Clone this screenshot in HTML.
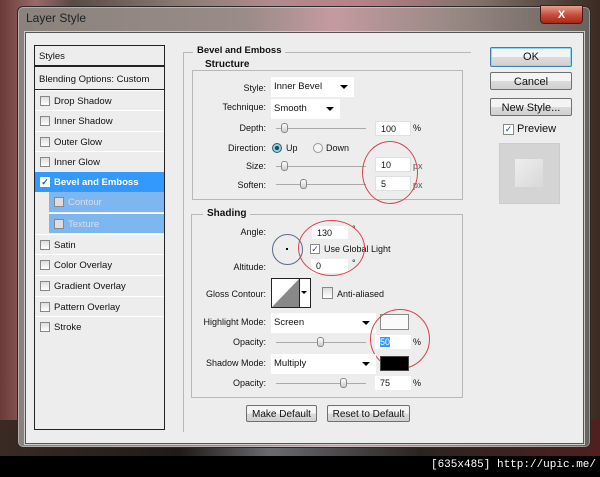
<!DOCTYPE html>
<html><head><meta charset="utf-8"><style>
*{margin:0;padding:0;box-sizing:border-box}
body{width:600px;height:477px;background:#000;position:relative;overflow:hidden;font-family:"Liberation Sans",sans-serif;font-size:9px;color:#111}
.a{position:absolute}
.lbl{position:absolute;text-align:right;width:90px;font-size:9px}
.inp{position:absolute;background:#fff;border:1px solid #e0e0e0;font-size:9px;padding:2px 0 0 5px}
.grp{position:absolute;border:1px solid #b8b8b8}
.gt{position:absolute;background:#ededed;font-weight:bold;font-size:9.5px;padding:0 4px}
.cb{position:absolute;width:10px;height:10px;border:1px solid #888;background:linear-gradient(#ddd,#fff)}
.row{position:absolute;left:35px;width:129px;height:20px;border-top:1px solid #fff;font-size:9.5px;padding:5px 0 0 19px}
.row .cb{left:5px;top:5px}
.sl{position:absolute;height:1px;background:#aaa;width:90px}
.th{position:absolute;width:7px;height:10px;border:1px solid #888;border-radius:3px;background:linear-gradient(#fff,#ccc)}
.dd{position:absolute;background:#fff;font-size:9.5px;padding:4px 0 0 3px}
.dd:after{content:"";position:absolute;right:6px;top:8px;border:4px solid transparent;border-top:4px solid #000}
.btn{position:absolute;border:1px solid #707070;border-radius:2px;background:linear-gradient(#f4f4f4 50%,#dcdcdc 50%,#d0d0d0);text-align:center;font-size:10px;padding-top:3px}
.red{position:absolute;border:1px solid #d8424e;border-radius:50%}
</style></head><body>
<div class="a" style="left:0;top:0;width:600px;height:456px;background:linear-gradient(90deg,#6a3a38 0,#9a6a68 6%,#5a4a44 12%,#8a7a72 30%,#b08a8c 45%,#b88088 60%,#807068 80%,#3a2a22 100%)"></div>
<div class="a" style="left:0;top:420px;width:600px;height:36px;background:linear-gradient(90deg,#3a2a24,#201a18 30%,#6a6a70 45%,#2a2420 70%,#502020)"></div>
<div class="a" style="left:17px;top:6px;width:574px;height:442px;border:1px solid #2a2a2a;border-radius:6px;background:linear-gradient(90deg,#8a827c,#9a8c88 40%,#c49aa0 55%,#9a8a86 75%,#6a625c);box-shadow:inset 0 0 0 1px rgba(255,255,255,.35)"></div>
<div class="a" style="left:26px;top:11px;font-size:12px;color:#222">Layer Style</div>
<div class="a" style="left:540px;top:5px;width:43px;height:19px;border:1px solid #4a1a1a;border-radius:0 0 4px 4px;background:linear-gradient(#e8a090,#c85040 50%,#a82818);color:#fff;font-weight:bold;font-size:11px;text-align:center;padding-top:3px">X</div>
<div class="a" style="left:25px;top:32px;width:559px;height:412px;background:#ededed;border:1px solid #555;box-shadow:0 0 0 1px #ccc"></div>

<!-- list -->
<div class="a" style="left:34px;top:45px;width:131px;height:385px;border:1px solid #222;background:#ededed"></div>
<div class="a" style="left:35px;top:46px;width:129px;height:21px;font-size:9.5px;padding:5px 0 0 4px;border-bottom:2px solid #222">Styles</div>
<div class="a" style="left:35px;top:69px;width:129px;height:21px;font-size:9.5px;padding:5px 0 0 4px;border-bottom:1px solid #222">Blending Options: Custom</div>
<div class="row" style="top:90px"><div class="cb"></div>Drop Shadow</div>
<div class="row" style="top:110px"><div class="cb"></div>Inner Shadow</div>
<div class="row" style="top:131px"><div class="cb"></div>Outer Glow</div>
<div class="row" style="top:151px"><div class="cb"></div>Inner Glow</div>
<div class="row" style="top:172px;background:#3399ff;color:#fff;font-weight:bold;border-top:none"><div class="cb" style="background:#fff;border-color:#fff;color:#2255aa;font-size:9px;line-height:8px;text-align:center">✓</div>Bevel and Emboss</div>
<div class="row" style="top:192px;left:49px;width:115px;background:#7eb6f0;color:#dde;border-top:none"><div class="cb" style="background:#ddd"></div>Contour</div>
<div class="row" style="top:213px;left:49px;width:115px;background:#7eb6f0;color:#dde"><div class="cb" style="background:#ddd"></div>Texture</div>
<div class="row" style="top:234px"><div class="cb"></div>Satin</div>
<div class="row" style="top:254px"><div class="cb"></div>Color Overlay</div>
<div class="row" style="top:275px"><div class="cb"></div>Gradient Overlay</div>
<div class="row" style="top:296px"><div class="cb"></div>Pattern Overlay</div>
<div class="row" style="top:316px"><div class="cb"></div>Stroke</div>

<!-- main group -->
<div class="grp" style="left:183px;top:52px;width:288px;height:380px;border-bottom:none;border-right:none"></div>
<div class="gt" style="left:193px;top:45px">Bevel and Emboss</div>
<div class="grp" style="left:192px;top:70px;width:271px;height:130px"></div>
<div class="gt" style="left:201px;top:59px;font-size:10px">Structure</div>
<div class="lbl" style="left:176px;top:83px">Style:</div>
<div class="dd" style="left:271px;top:77px;width:83px;height:20px">Inner Bevel</div>
<div class="lbl" style="left:176px;top:102px">Technique:</div>
<div class="dd" style="left:271px;top:99px;width:69px;height:20px">Smooth</div>
<div class="lbl" style="left:176px;top:123px">Depth:</div>
<div class="sl" style="left:276px;top:128px"></div><div class="th" style="left:281px;top:123px"></div>
<div class="inp" style="left:375px;top:121px;width:36px;height:15px">100</div><div class="a" style="left:413px;top:123px">%</div>
<div class="lbl" style="left:176px;top:143px">Direction:</div>
<div class="a" style="left:272px;top:143px;width:10px;height:10px;border-radius:50%;border:1px solid #2a5a80;background:radial-gradient(#1a4a70 35%,#9cc 40%)"></div>
<div class="a" style="left:286px;top:143px">Up</div>
<div class="a" style="left:313px;top:143px;width:10px;height:10px;border-radius:50%;border:1px solid #999;background:#f4f4f4"></div>
<div class="a" style="left:326px;top:143px">Down</div>
<div class="lbl" style="left:176px;top:161px">Size:</div>
<div class="sl" style="left:276px;top:166px"></div><div class="th" style="left:281px;top:161px"></div>
<div class="inp" style="left:375px;top:157px;width:36px;height:15px">10</div><div class="a" style="left:413px;top:161px;color:#555">px</div>
<div class="lbl" style="left:176px;top:180px">Soften:</div>
<div class="sl" style="left:276px;top:184px"></div><div class="th" style="left:300px;top:179px"></div>
<div class="inp" style="left:375px;top:176px;width:36px;height:15px">5</div><div class="a" style="left:413px;top:180px;color:#555">px</div>
<div class="red" style="left:362px;top:141px;width:56px;height:63px"></div>

<!-- shading -->
<div class="grp" style="left:191px;top:214px;width:272px;height:184px"></div>
<div class="gt" style="left:203px;top:208px;font-size:10px">Shading</div>
<div class="lbl" style="left:176px;top:227px">Angle:</div>
<div class="a" style="left:272px;top:234px;width:31px;height:31px;border-radius:50%;border:1.5px solid #5a6a90"></div>
<div class="a" style="left:286px;top:248px;width:2px;height:2px;background:#000"></div>
<div class="inp" style="left:312px;top:226px;width:36px;height:13px;border:none">130</div><div class="a" style="left:352px;top:224px">°</div>
<div class="cb" style="left:310px;top:244px;background:#fff;color:#2a4a90;font-size:9px;line-height:8px;text-align:center">✓</div>
<div class="a" style="left:324px;top:244px">Use Global Light</div>
<div class="lbl" style="left:176px;top:262px">Altitude:</div>
<div class="inp" style="left:311px;top:259px;width:37px;height:14px;border:none">0</div><div class="a" style="left:352px;top:258px">°</div>
<div class="red" style="left:298px;top:220px;width:67px;height:56px"></div>
<div class="lbl" style="left:176px;top:289px">Gloss Contour:</div>
<div class="a" style="left:271px;top:278px;width:40px;height:30px;border:1px solid #222;background:#fff"></div>
<div class="a" style="left:272px;top:279px;width:0;height:0;border-left:27px solid transparent;border-bottom:28px solid #888"></div>
<div class="a" style="left:299px;top:279px;width:11px;height:28px;border-left:1px solid #222;background:#fff"></div>
<div class="a" style="left:301px;top:291px;border:3px solid transparent;border-top:3px solid #000"></div>
<div class="cb" style="left:322px;top:287px;width:11px;height:12px"></div>
<div class="a" style="left:337px;top:289px">Anti-aliased</div>
<div class="lbl" style="left:176px;top:317px">Highlight Mode:</div>
<div class="dd" style="left:271px;top:313px;width:105px;height:20px">Screen</div>
<div class="a" style="left:380px;top:314px;width:29px;height:16px;border:1px solid #888;background:#fafafa"></div>
<div class="lbl" style="left:176px;top:337px">Opacity:</div>
<div class="sl" style="left:276px;top:342px"></div><div class="th" style="left:317px;top:337px"></div>
<div class="inp" style="left:375px;top:335px;width:36px;height:14px;border:none"><span style="background:#3399ff;color:#fff">50</span></div><div class="a" style="left:413px;top:337px">%</div>
<div class="red" style="left:370px;top:309px;width:60px;height:60px"></div>
<div class="lbl" style="left:176px;top:358px">Shadow Mode:</div>
<div class="dd" style="left:271px;top:354px;width:105px;height:20px">Multiply</div>
<div class="a" style="left:380px;top:356px;width:29px;height:15px;border:1px solid #444;background:#000"></div>
<div class="lbl" style="left:176px;top:378px">Opacity:</div>
<div class="sl" style="left:276px;top:383px"></div><div class="th" style="left:340px;top:378px"></div>
<div class="inp" style="left:375px;top:376px;width:36px;height:14px;border:none">75</div><div class="a" style="left:413px;top:378px">%</div>
<div class="btn" style="left:246px;top:405px;width:71px;height:17px">Make Default</div>
<div class="btn" style="left:327px;top:405px;width:83px;height:17px">Reset to Default</div>

<!-- right -->
<div class="btn" style="left:490px;top:47px;width:82px;height:20px;border-color:#3c7fb1;box-shadow:inset 0 0 0 1px #8fd5f5;font-size:11px">OK</div>
<div class="btn" style="left:490px;top:72px;width:82px;height:18px;font-size:11px">Cancel</div>
<div class="btn" style="left:490px;top:98px;width:82px;height:18px;font-size:11px">New Style...</div>
<div class="cb" style="left:503px;top:124px;width:11px;height:11px;background:#fff;color:#2a4a90;font-size:9px;line-height:9px;text-align:center">✓</div>
<div class="a" style="left:517px;top:123px;font-size:11px">Preview</div>
<div class="a" style="left:499px;top:143px;width:61px;height:61px;background:#d4d4d4;border:1px solid #ccc"></div>
<div class="a" style="left:515px;top:159px;width:28px;height:28px;background:linear-gradient(135deg,#eee,#d8d8d8)"></div>

<div class="a" style="right:4px;top:459px;color:#fff;font-size:11px;font-family:'Liberation Mono',monospace">[635x485] http://upic.me/</div>
</body></html>
